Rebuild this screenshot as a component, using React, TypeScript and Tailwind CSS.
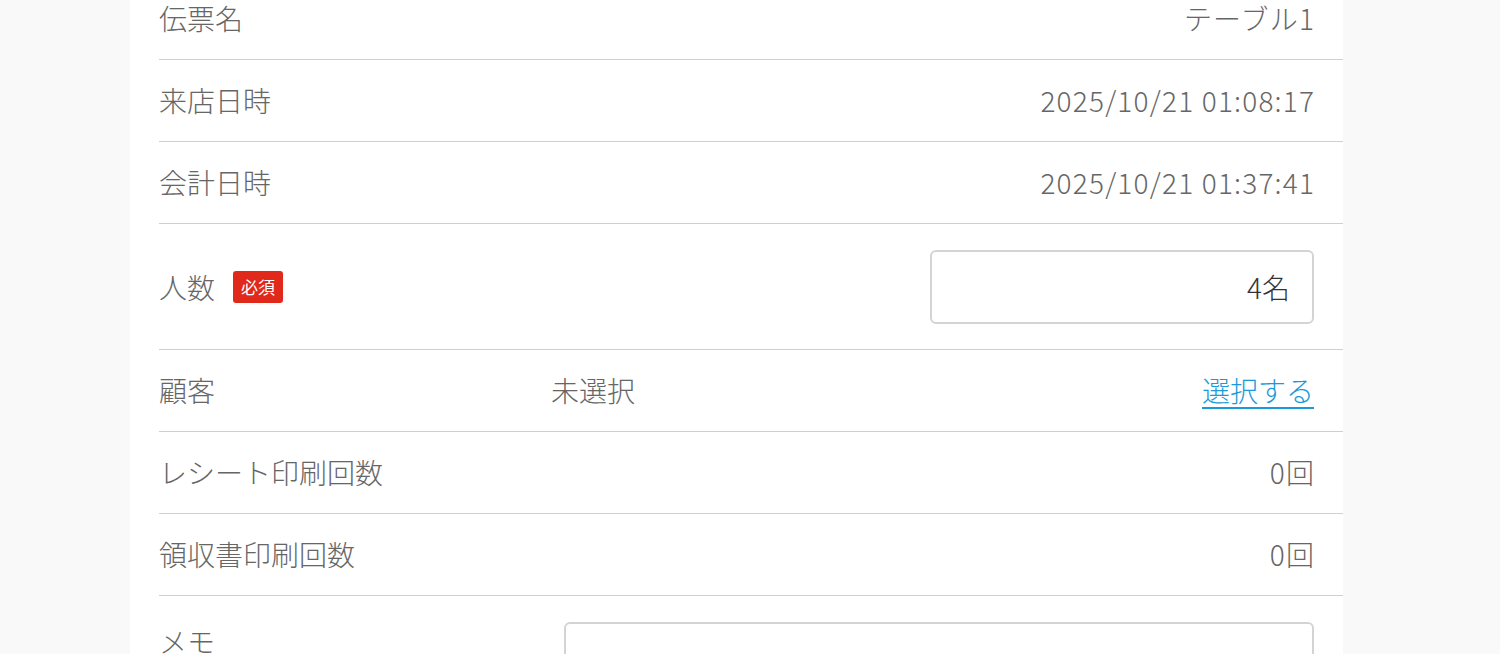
import React, { useState } from 'react';

const font = { fontFamily: '"Noto Sans CJK JP", "Noto Sans", sans-serif' };

const rowBase = 'flex items-center border-b border-[#cfcfcf] pr-[29px]';

const InfoRow: React.FC<{ label: string; value: string }> = ({ label, value }) => (
  <div className={`${rowBase} h-[82px] justify-between`}>
    <span className="-mt-[2px] text-[28px] leading-none font-light text-[#666]">{label}</span>
    <span className="-mt-[2px] -mr-[1.2px] text-[28px] leading-none font-light tracking-[1.2px] text-[#666]">{value}</span>
  </div>
);

const App: React.FC = () => {
  const [people, setPeople] = useState('4名');
  const [memo, setMemo] = useState('');

  return (
    <div className="min-h-[654px] bg-[#f9f9f9] overflow-hidden" style={font}>
      <div className="ml-[130px] w-[1213px] bg-white pl-[29px] -mt-[22px] min-h-[700px]">
        <InfoRow label="伝票名" value="テーブル1" />
        <InfoRow label="来店日時" value="2025/10/21 01:08:17" />
        <InfoRow label="会計日時" value="2025/10/21 01:37:41" />

        <div className={`${rowBase} h-[126px] justify-between`}>
          <div className="flex items-center">
            <span className="text-[28px] leading-none font-light text-[#666]">人数</span>
            <span className="ml-[18px] flex h-[32px] w-[50px] items-center justify-center rounded-[3px] bg-[#e0281b] text-[17px] leading-none text-white">
              必須
            </span>
          </div>
          <input
            value={people}
            onChange={e => setPeople(e.target.value)}
            className="h-[74px] w-[384px] rounded-[6px] border-2 border-[#d4d4d4] bg-white pr-[22px] text-right text-[28px] font-light text-[#333] outline-none"
          />
        </div>

        <div className={`${rowBase} h-[82px]`}>
          <span className="-mt-[2px] w-[392px] text-[28px] leading-none font-light text-[#666]">顧客</span>
          <span className="-mt-[2px] flex-1 text-[28px] leading-none font-light text-[#666]">未選択</span>
          <button className="-mt-[2px] text-[28px] leading-none font-light text-[#1a9ad8] underline underline-offset-[5px] decoration-[2px]">
            選択する
          </button>
        </div>

        <InfoRow label="レシート印刷回数" value="0回" />
        <InfoRow label="領収書印刷回数" value="0回" />

        <div className="flex items-start pr-[29px] pt-[26px]">
          <span className="mt-[2px] text-[28px] leading-[34px] font-light text-[#666]">メモ</span>
          <textarea
            value={memo}
            onChange={e => setMemo(e.target.value)}
            className="ml-auto h-[160px] w-[750px] resize-none rounded-[6px] border-2 border-[#d4d4d4] p-3 text-[28px] text-[#333] outline-none"
          />
        </div>
      </div>
    </div>
  );
};

export default App;
